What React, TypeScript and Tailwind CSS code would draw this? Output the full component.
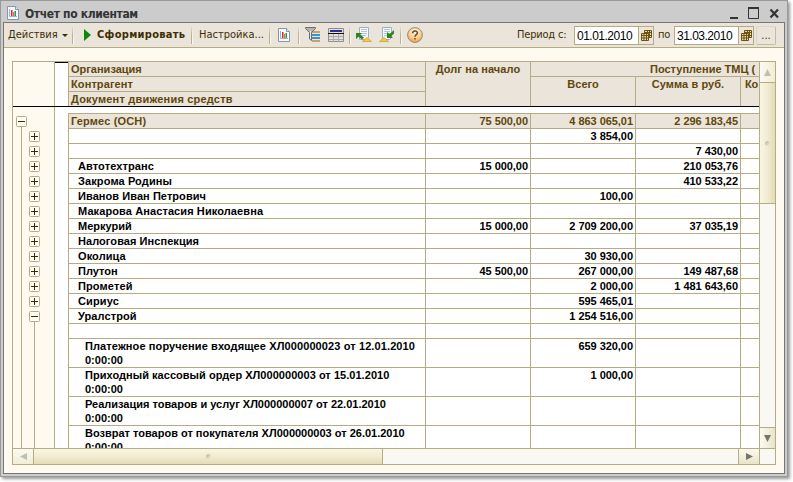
import React from 'react';

const BAR = "font-['DejaVu_Sans_Condensed','DejaVu_Sans',sans-serif]";

type Row = { name: string; v?: [string, string, string]; kind: 'org' | 'client' | 'doc'; tracking?: string };

const rows: Row[] = [
  { name: 'Гермес (ОСН)', v: ['75 500,00', '4 863 065,01', '2 296 183,45'], kind: 'org', tracking: 'tracking-[0.15px]' },
  { name: '', v: ['', '3 854,00', ''], kind: 'client' },
  { name: '', v: ['', '', '7 430,00'], kind: 'client' },
  { name: 'Автотехтранс', v: ['15 000,00', '', '210 053,76'], kind: 'client', tracking: 'tracking-[0.1px]' },
  { name: 'Закрома Родины', v: ['', '', '410 533,22'], kind: 'client', tracking: 'tracking-[0.12px]' },
  { name: 'Иванов Иван Петрович', v: ['', '100,00', ''], kind: 'client', tracking: 'tracking-[0.06px]' },
  { name: 'Макарова Анастасия Николаевна', kind: 'client', tracking: 'tracking-[0.1px]' },
  { name: 'Меркурий', v: ['15 000,00', '2 709 200,00', '37 035,19'], kind: 'client' },
  { name: 'Налоговая Инспекция', kind: 'client', tracking: 'tracking-[0.06px]' },
  { name: 'Околица', v: ['', '30 930,00', ''], kind: 'client', tracking: 'tracking-[0.1px]' },
  { name: 'Плутон', v: ['45 500,00', '267 000,00', '149 487,68'], kind: 'client' },
  { name: 'Прометей', v: ['', '2 000,00', '1 481 643,60'], kind: 'client', tracking: 'tracking-[0.12px]' },
  { name: 'Сириус', v: ['', '595 465,01', ''], kind: 'client', tracking: 'tracking-[0.12px]' },
  { name: 'Уралстрой', v: ['', '1 254 516,00', ''], kind: 'client', tracking: 'tracking-[0.1px]' },
  { name: '', kind: 'client' },
  { name: 'Платежное поручение входящее ХЛ000000023 от 12.01.2010', v: ['', '659 320,00', ''], kind: 'doc', tracking: 'tracking-[0.11px]' },
  { name: 'Приходный кассовый ордер ХЛ000000003 от 15.01.2010', v: ['', '1 000,00', ''], kind: 'doc', tracking: 'tracking-[0.04px]' },
  { name: 'Реализация товаров и услуг ХЛ000000007 от 22.01.2010', kind: 'doc' },
  { name: 'Возврат товаров от покупателя ХЛ000000003 от 26.01.2010', kind: 'doc' },
];

function Separator({ className = '' }: { className?: string }) {
  return (
    <div className={`flex h-[18px] w-[2px] shrink-0 ${className}`}>
      <div className="w-px bg-linear-to-b from-[#eae4da] via-[#b9b08d] to-[#b9b08d]" />
      <div className="w-px bg-linear-to-b from-[#eae4da] to-[#fffdf6]" />
    </div>
  );
}

function ChartSheet({ className = '' }: { className?: string }) {
  return (
    <svg className={`shrink-0 ${className}`} width="12" height="14" viewBox="0 0 12 14">
      <path d="M.5.5h8l3 3v10H.5z" fill="#f6fafd" stroke="#7e99b0" />
      <path d="M8.500.5v3h3" fill="#dce8f2" stroke="#7e99b0" />
      <path d="M2.500 3v7.500H10" fill="none" stroke="#9fb3c4" />
      <path d="M4 4h1.500v6H4z" fill="#d92a20" />
      <path d="M6 6h1v4H6z" fill="#e8675c" />
      <path d="M7.500 5H9v5H7.500z" fill="#2c9440" />
    </svg>
  );
}

function FilterIcon() {
  return (
    <svg className="shrink-0" width="16" height="16" viewBox="0 0 16 16">
      <path d="M7 4h8v2H7z" fill="#d39b68" />
      <path d="M7 7h8v2H7zM7 10h8v2H7z" fill="#2f97c9" />
      <path d="M7 13h8v2H7z" fill="#d39b68" />
      <path d="M.5.5h10v1L6.500 5.500v8L4.500 12V5.500L.5 1.500z" fill="#b5b5b5" stroke="#6c6c6c" />
      <path d="M5.500 4v8" stroke="#e6e6e6" />
    </svg>
  );
}

function TableIcon() {
  return (
    <svg className="shrink-0" width="16" height="14" viewBox="0 0 16 14">
      <path d="M.5.5h15v13H.5z" fill="#e4e0d8" stroke="#8e8e8e" />
      <path d="M2 2h12v2H2z" fill="#2a2f9c" />
      <path d="M0 5h16v1H0z" fill="#111" />
      <path d="M1 8.500h14M1 11.500h14M5.500 6v8M10.500 6v8" stroke="#aaa" />
    </svg>
  );
}

function SheetArrow({ out = false }: { out?: boolean }) {
  return (
    <svg className="shrink-0" width="16" height="16" viewBox="0 0 16 16">
      <path d="M3.500.5h9v10l-2 2h-7z" fill="#f4f8fc" stroke="#9ab0c4" />
      <path d="M5 2.500h6M5 4.500h6M5 6.500h6M5 8.500h5" stroke="#b4c4d2" />
      {out ? (
        <path d="M8 5v6h6l-1.800-1.800L15 6.500V3l-4.500 4z" fill="#2f8420" />
      ) : (
        <path d="M0 6h6L4.300 7.700 8 10.500 6 12.500 2.500 9.700 0 12z" fill="#2f8420" />
      )}
      <path d={out ? 'M.5 14.500L5 10.500l4.500 4z' : 'M6.500 14.500l4.500-4 4.500 4z'} fill="#f0cb4c" stroke="#c99a22" strokeWidth=".7" />
    </svg>
  );
}

function HelpIcon() {
  return (
    <svg className="shrink-0" width="16" height="16" viewBox="0 0 16 16">
      <defs>
        <radialGradient id="help" cx=".5" cy=".3" r=".75">
          <stop offset="0" stopColor="#fff3dc" />
          <stop offset=".5" stopColor="#ffd394" />
          <stop offset="1" stopColor="#f09a30" />
        </radialGradient>
      </defs>
      <circle cx="8" cy="8" r="7.400" fill="url(#help)" stroke="#948880" />
      <path d="M5.700 6.200C5.700 3.200 10.500 3.300 10.400 6.100 10.300 7.700 8 7.800 8 9.800M8 10.900v1.600" fill="none" stroke="#5c4a3c" strokeWidth="1.500" />
    </svg>
  );
}

function DateField({ value }: { value: string }) {
  return (
    <div className="flex h-[19px] w-[80px] shrink-0 border border-[#b5ac84] bg-white">
      <div className="w-[64px] pl-[2px] font-['Liberation_Sans',Arial,sans-serif] text-[12px] leading-[18px] tracking-[-0.5px] text-black">{value}</div>
      <div className="flex w-[15px] items-center justify-center border-l border-[#b5ac84] bg-[#ece6dc]">
        <svg width="11" height="11" viewBox="0 0 11 11">
          <path d="M3.500.5h7v7h-7z" fill="#e9dcae" stroke="#6b5212" />
          <path d="M3.500 2.500h7M3.500 5.500h7M6.500.5v7M8.500.5v7" stroke="#6b5212" />
          <path d="M.5 3.500h7v7h-7z" fill="#e9dcae" stroke="#6b5212" />
          <path d="M.5 5.500h7M.5 8h7M3 3.500v7M5.500 3.500v7" stroke="#6b5212" />
        </svg>
      </div>
    </div>
  );
}

function TreeBox({ open = false }: { open?: boolean }) {
  return (
    <svg className="shrink-0" width="11" height="11" viewBox="0 0 11 11">
      <rect x=".5" y=".5" width="10" height="10" rx="1" fill="#fffdf8" stroke="#b5ac84" />
      <path d={open ? 'M2 5.500h7' : 'M2 5.500h7M5.500 2v7'} stroke="#3a2a00" />
    </svg>
  );
}

function Grip() {
  return <div className="h-[5px] w-[5px] rounded-full bg-linear-to-br from-[#b5b19c] to-[#f4f1e0]" />;
}

function TitleBar() {
  return (
    <div className="flex h-[19px] items-center pl-[4px]">
      <ChartSheet />
      <div className={`${BAR} ml-[6px] mt-[2px] text-[12px] leading-[16px] font-bold tracking-[-0.35px] whitespace-nowrap text-[#333]`}>
        Отчет по клиентам
      </div>
      <svg className="mr-[6px] ml-auto" width="49" height="12" viewBox="0 0 49 12">
        <path d="M0 10h8v2H0z" fill="#333" />
        <path d="M18.500 1v10.500h10V1" fill="none" stroke="#333" />
        <path d="M18 0h11v2H18z" fill="#333" />
        <path d="M40.500 2.500l7.500 8M48 2.500l-7.500 8" stroke="#333" strokeWidth="2.200" />
      </svg>
    </div>
  );
}

function Toolbar() {
  return (
    <div className={`${BAR} flex h-[25px] shrink-0 items-center border-b border-[#b5ac84] bg-[#eae4da] text-[11px] whitespace-nowrap text-[#3e2f05]`}>
      <div className="w-[54px] shrink-0 pl-[4px]">Действия</div>
      <svg width="6" height="3" viewBox="0 0 6 3" className="ml-[4px] shrink-0"><path d="M0 0h6L3 3z" fill="#3e2f05" /></svg>
      <Separator className="ml-[4px]" />
      <svg width="7" height="12" viewBox="0 0 7 12" className="ml-[10px] shrink-0"><path d="M0 0l7 6-7 6z" fill="#0a8a0a" /></svg>
      <div className="ml-[6px] w-[94px] shrink-0 font-bold tracking-[0.3px]">Сформировать</div>
      <Separator />
      <div className="ml-[6px] w-[70px] shrink-0">Настройка...</div>
      <Separator />
      <ChartSheet className="ml-[7px]" />
      <Separator className="ml-[8px]" />
      <div className="w-[5px] shrink-0" />
      <FilterIcon />
      <div className="w-[7px] shrink-0" />
      <TableIcon />
      <Separator className="ml-[5px]" />
      <div className="w-[5px] shrink-0" />
      <SheetArrow />
      <div className="w-[7px] shrink-0" />
      <SheetArrow out />
      <Separator className="ml-[5px]" />
      <div className="w-[5px] shrink-0" />
      <HelpIcon />
      <div className="flex-1" />
      <div className="w-[57px] shrink-0 tracking-[-0.2px]">Период с:</div>
      <DateField value="01.01.2010" />
      <div className="w-[20px] shrink-0 pl-[4px] tracking-[-0.3px]">по</div>
      <DateField value="31.03.2010" />
      <div className="mr-[8px] ml-[2px] flex h-[19px] w-[20px] shrink-0 justify-center rounded-[2px] border border-[#c4bc9c] border-t-[#ddd6c8] border-l-[#ddd6c8] leading-[17px]">...</div>
    </div>
  );
}

const line = 'border-[#b5ac84]';

function ReportHeader() {
  return (
    <div className="flex h-[45px] shrink-0 border-b border-black leading-[14px] whitespace-nowrap text-[#5f470c]">
      <div className={`w-[42px] shrink-0 border-r ${line}`} />
      <div className="w-[13px] shrink-0 border-t border-black bg-white" />
      <div className={`w-[358px] shrink-0 border-x ${line} bg-[#eae4da]`}>
        <div className={`h-[15px] border-b pl-[2px] ${line}`}>Организация</div>
        <div className={`h-[15px] border-b pl-[2px] tracking-[0.1px] ${line}`}>Контрагент</div>
        <div className="h-[14px] pl-[2px] tracking-[0.2px]">Документ движения средств</div>
      </div>
      <div className={`w-[105px] shrink-0 border-r ${line} bg-[#eae4da] text-center tracking-[0.08px]`}>Долг на начало</div>
      <div className="w-[228px] shrink-0 bg-[#eae4da]">
        <div className={`h-[15px] border-b pl-[119px] ${line}`}>Поступление ТМЦ (</div>
        <div className="flex h-[29px]">
          <div className={`w-[105px] border-r text-center ${line}`}>Всего</div>
          <div className={`w-[105px] border-r text-center tracking-[0.08px] ${line}`}>Сумма в руб.</div>
          <div className="w-[18px] pl-[4px] tracking-[-0.2px]">Ко</div>
        </div>
      </div>
    </div>
  );
}

function ReportRow({ row }: { row: Row }) {
  const tone = row.kind === 'org' ? 'bg-[#eae4da] text-[#5f470c]' : 'bg-white text-black';
  const height = row.kind === 'doc' ? 'h-[29px]' : 'h-[15px]';
  const indent = row.kind === 'org' ? 'pl-[2px]' : row.kind === 'client' ? 'pl-[9px]' : 'pl-[16px]';
  return (
    <div className={`flex shrink-0 border-b leading-[14px] whitespace-nowrap ${line} ${tone} ${height}`}>
      <div className={`w-[357px] shrink-0 border-r ${line} ${indent}`}>
        <div className={row.tracking}>{row.name}</div>
        {row.kind === 'doc' && <div>0:00:00</div>}
      </div>
      {[0, 1, 2].map((i) => (
        <div key={i} className={`w-[105px] shrink-0 border-r pr-[2px] text-right tracking-[-0.05px] ${line}`}>{row.v?.[i]}</div>
      ))}
    </div>
  );
}

function ReportBody() {
  return (
    <div className="flex min-h-0 flex-1 overflow-hidden">
      <div className={`flex w-[42px] shrink-0 border-r ${line}`}>
        <div className="flex w-[16px] flex-col pt-[9px] pl-[3px]">
          <TreeBox open />
          <div className="ml-[5px] w-px flex-1 bg-[#b5ac84]" />
        </div>
        <div className="flex flex-col pt-[24px]">
          <div className="flex flex-col gap-[4px]">
            {rows.slice(1, 14).map((_, i) => <TreeBox key={i} open={i === 12} />)}
          </div>
          <div className="ml-[5px] w-px flex-1 bg-[#b5ac84]" />
        </div>
      </div>
      <div className="w-[13px] shrink-0 bg-white" />
      <div className="flex flex-1 flex-col overflow-hidden bg-white pt-[6px]">
        <div className={`flex flex-col border-t border-l ${line}`}>
          {rows.map((row, i) => <ReportRow key={i} row={row} />)}
        </div>
      </div>
    </div>
  );
}

function VerticalScroll() {
  return (
    <div className={`flex w-[16px] shrink-0 flex-col border-l bg-[#faf8f3] ${line}`}>
      <div className={`flex h-[21px] items-center justify-center border-b bg-linear-to-r from-[#fbfaf1] to-[#f1edd8] ${line}`}>
        <svg width="7" height="7" viewBox="0 0 7 7"><path d="M3.500 0L7 7H0z" fill="#c0bdb2" /></svg>
      </div>
      <div className={`flex h-[121px] items-center justify-center border-b bg-linear-to-r from-[#f8f5e4] via-[#f1ecd2] to-[#e3dcb6] ${line}`}>
        <Grip />
      </div>
      <div className="flex-1" />
      <div className={`flex h-[21px] items-center justify-center border-t bg-linear-to-r from-[#fbfaf1] to-[#e9e4c8] ${line}`}>
        <svg width="7" height="7" viewBox="0 0 7 7"><path d="M0 0h7L3.500 7z" fill="#77746c" /></svg>
      </div>
    </div>
  );
}

function HorizontalScroll() {
  return (
    <div className={`flex h-[16px] shrink-0 border-t bg-[#faf8f3] ${line}`}>
      <div className={`flex w-[21px] items-center justify-center border-r bg-linear-to-b from-[#fbfaf1] to-[#f1edd8] ${line}`}>
        <svg width="7" height="7" viewBox="0 0 7 7"><path d="M7 0v7L0 3.500z" fill="#c0bdb2" /></svg>
      </div>
      <div className={`flex w-[349px] items-center justify-center border-r bg-linear-to-b from-[#f8f5e4] via-[#f1ecd2] to-[#e3dcb6] ${line}`}>
        <Grip />
      </div>
      <div className="flex-1" />
      <div className={`flex w-[22px] items-center justify-center border-x bg-linear-to-b from-[#fbfaf1] to-[#e9e4c8] ${line}`}>
        <svg width="7" height="7" viewBox="0 0 7 7"><path d="M0 0v7l7-3.500z" fill="#77746c" /></svg>
      </div>
      <div className="w-[15px]" />
    </div>
  );
}

export default function App() {
  return (
    <div className="h-[482px] w-[793px] overflow-hidden bg-white">
      <div className="flex h-[477px] w-[788px] flex-col border border-[#999] bg-[#ccc] p-[2px] shadow-[2px_2px_3px_#999]">
        <TitleBar />
        <div className="flex min-h-0 flex-1 flex-col border border-[#777] bg-[#fffaf0]">
          <Toolbar />
          <div className={`mt-[13px] ml-[8px] flex h-[404px] w-[764px] flex-col border font-['Liberation_Sans',Arial,sans-serif] text-[11px] font-bold ${line}`}>
            <div className="flex min-h-0 flex-1">
              <div className="flex min-w-0 flex-1 flex-col overflow-hidden">
                <ReportHeader />
                <ReportBody />
              </div>
              <VerticalScroll />
            </div>
            <HorizontalScroll />
          </div>
        </div>
      </div>
    </div>
  );
}
